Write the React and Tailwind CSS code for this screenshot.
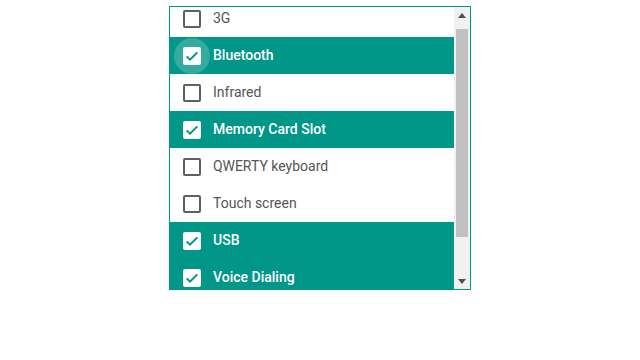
import React, { useState } from 'react';

const features = [
  { label: '3G', checked: false },
  { label: 'Bluetooth', checked: true, focused: true },
  { label: 'Infrared', checked: false },
  { label: 'Memory Card Slot', checked: true },
  { label: 'QWERTY keyboard', checked: false },
  { label: 'Touch screen', checked: false },
  { label: 'USB', checked: true },
  { label: 'Voice Dialing', checked: true },
  { label: 'Wi-Fi', checked: false },
];

function Checkbox({ checked, focused }) {
  return (
    <span className="relative flex w-[18px] h-[18px] shrink-0 items-center justify-center">
      {focused && (
        <span className="absolute left-[-9px] top-[-9px] w-9 h-9 rounded-full bg-white/20" />
      )}
      {checked ? (
        <span className="relative flex w-[18px] h-[18px] items-center justify-center rounded-[2px] bg-white">
          <svg width="16" height="16" viewBox="0 0 24 24" fill="none">
            <path d="M4 12.5l5 5L20 6.5" stroke="#009688" strokeWidth="3" />
          </svg>
        </span>
      ) : (
        <span className="w-[18px] h-[18px] rounded-[2px] border-2 border-[#5f5f5f]" />
      )}
    </span>
  );
}

// drawn scrollbar, the page has no visible native one
function Scrollbar() {
  return (
    <div className="w-4 shrink-0 bg-[#f1f1f1] flex flex-col">
      <div className="h-4 flex items-center justify-center">
        <svg width="8" height="5" viewBox="0 0 8 5"><path d="M4 0L8 5H0z" fill="#505050" /></svg>
      </div>
      <div className="flex-1 pt-[6px] pb-[36px] px-[2px]">
        <div className="h-full bg-[#c1c1c1]" />
      </div>
      <div className="h-4 flex items-center justify-center">
        <svg width="8" height="5" viewBox="0 0 8 5"><path d="M0 0H8L4 5z" fill="#505050" /></svg>
      </div>
    </div>
  );
}

export default function App() {
  const [items] = useState(features);

  return (
    <div className="w-[640px] h-[360px] bg-white pt-[6px] flex justify-center" style={{ fontFamily: 'Roboto, "Noto Sans", sans-serif' }}>
      <div className="w-[302px] h-[284px] border border-[#009688] flex">
        <div className="flex-1 overflow-hidden">
          <div className="mt-[-7px]">
            {items.map(item => (
              <div
                key={item.label}
                className={`h-[37px] flex items-center pl-[13px] gap-3 text-sm ${
                  item.checked ? 'bg-[#009688] text-white font-medium' : 'text-[#555555]'
                }`}
              >
                <Checkbox checked={item.checked} focused={item.focused} />
                <span className="pb-[2px]">{item.label}</span>
              </div>
            ))}
          </div>
        </div>
        <Scrollbar />
      </div>
    </div>
  );
}
